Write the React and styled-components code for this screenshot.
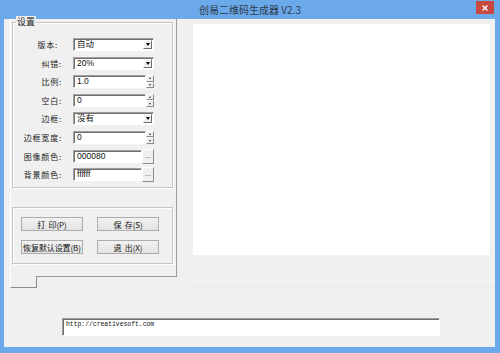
import React from 'react';
import styled, { createGlobalStyle } from 'styled-components';

const GlobalStyle = createGlobalStyle`
  html, body {
    margin:0;
    padding:0;
    background:#6ca9eb;
  }
  body {
    font-family:"Noto Sans CJK SC", "Liberation Sans", sans-serif;
  }
`;

const Window = styled.div`
  width:500px;
  height:353px;
  background:#6ca9eb;
  display:flex;
  flex-direction:column;
  overflow:hidden;
`;

const TitleBar = styled.div`
  position:relative;
  height:19px;
  display:flex;
  align-items:center;
  justify-content:center;
  font-size:10px;
  color:#2d3b4c;
`;

const CloseButton = styled.div`
  position:absolute;
  top:1px;
  right:6px;
  width:18px;
  height:13px;
  display:flex;
  align-items:center;
  justify-content:center;
  background:#c8493d;
`;

const Client = styled.div`
  flex:1;
  margin:0 5px 6px 4px;
  background:#f0f0f0;
  display:flex;
  flex-direction:column;
`;

const TopRow = styled.div`
  display:flex;
  height:269px;
`;

const LeftPanel = styled.div`
  margin-left:6px;
  width:167px;
  display:flex;
  flex-direction:column;
`;

const PanelBody = styled.div`
  box-sizing:border-box;
  height:258px;
  border-left:1px solid #fff;
  border-right:1px solid #9c9c9c;
  border-bottom:1px solid #9c9c9c;
  padding:3px 3px 0 1px;
`;

const Tab = styled.div`
  box-sizing:border-box;
  width:27px;
  height:12px;
  margin-top:-1px;
  background:#f0f0f0;
  border-left:1px solid #fff;
  border-right:1px solid #8c8c8c;
  border-bottom:1px solid #8c8c8c;
`;

const GroupBox = styled.div`
  position:relative;
  box-sizing:border-box;
  height:${p => p.$height}px;
  margin-top:${p => p.$top || 0}px;
  border:1px solid #c4c4c4;
  box-shadow:inset 1px 1px 0 #fff, 1px 1px 0 #fff;
`;

const Legend = styled.span`
  position:absolute;
  top:-7px;
  left:3px;
  padding:0 1px;
  background:#f0f0f0;
  font-size:9px;
  line-height:11px;
  color:#222;
`;

const FormGrid = styled.div`
  display:grid;
  grid-template-columns:49px 81px;
  column-gap:11px;
  grid-auto-rows:13px;
  row-gap:5.6px;
  padding-top:15px;
`;

const Label = styled.div`
  text-align:right;
  padding-right:${p => p.$shift || 0}px;
  font-size:8px;
  letter-spacing:0.8px;
  line-height:13px;
  color:#1a1a1a;
  white-space:nowrap;
`;

const Field = styled.div`
  display:flex;
  height:13px;
`;

const Sunken = styled.div`
  box-sizing:border-box;
  flex:${p => (p.$width ? 'none' : '1')};
  width:${p => (p.$width ? `${p.$width}px` : 'auto')};
  height:100%;
  display:flex;
  align-items:center;
  background:#fff;
  border:1px solid;
  border-color:#a0a0a0 #fff #fff #a0a0a0;
  box-shadow:inset 1px 1px 0 #6f6f6f;
  padding-left:3px;
  font-family:"Liberation Sans", "Noto Sans CJK SC", sans-serif;
  font-size:8.5px;
  color:#111;
  overflow:hidden;
`;

const Value = styled.span`
  flex:1;
  line-height:11px;
`;

const DropArrow = styled.div`
  box-sizing:border-box;
  width:9px;
  height:9px;
  margin-right:1px;
  display:flex;
  align-items:center;
  justify-content:center;
  background:#f0f0f0;
  border:1px solid;
  border-color:#fff #6f6f6f #6f6f6f #fff;

  &::after{
    content:'';
    border-left:2.5px solid transparent;
    border-right:2.5px solid transparent;
    border-top:3px solid #000;
  }
`;

const Spinner = styled.div`
  width:8px;
  display:flex;
  flex-direction:column;
`;

const SpinHalf = styled.div`
  flex:1;
  box-sizing:border-box;
  display:flex;
  align-items:center;
  justify-content:center;
  background:#eeeeee;
  border:1px solid;
  border-color:#fff #8c8c8c #8c8c8c #fff;

  &::after{
    content:'';
    border-left:1.5px solid transparent;
    border-right:1.5px solid transparent;
    ${p => (p.$up ? 'border-bottom:2px solid #333;' : 'border-top:2px solid #333;')}
  }
`;

const DotsButton = styled.div`
  box-sizing:border-box;
  width:13px;
  height:15px;
  margin-top:-1px;
  background:#f0f0f0;
  border:1px solid;
  border-color:#fff #8c8c8c #8c8c8c #fff;
  font-family:"Liberation Sans", sans-serif;
  font-size:7px;
  line-height:11px;
  text-align:center;
  color:#333;
`;

const ButtonGrid = styled.div`
  display:grid;
  grid-template-columns:62px 62px;
  column-gap:14px;
  grid-auto-rows:14px;
  row-gap:9px;
  padding:9px 0 0 8px;
`;

const Button = styled.div`
  box-sizing:border-box;
  display:flex;
  align-items:center;
  justify-content:center;
  border:1px solid #acacac;
  background:linear-gradient(#f2f2f2, #e3e3e3);
  font-size:8px;
  color:#111;
  white-space:pre;
  letter-spacing:-0.1px;
`;

const RightArea = styled.div`
  flex:1;
  margin-left:13px;
  padding:5px 0 0 3px;
  border-bottom:1px solid #eaeaea;
`;

const Preview = styled.div`
  width:297px;
  height:231px;
  background:#fff;
`;

const UrlBox = styled.div`
  box-sizing:border-box;
  width:378px;
  height:18px;
  margin:30px 0 0 58px;
  padding:2px 0 0 3px;
  background:#fff;
  border:1px solid;
  border-color:#a0a0a0 #fff #fff #a0a0a0;
  box-shadow:inset 1px 1px 0 #6f6f6f;
  font-family:"Liberation Mono", monospace;
  font-size:6.4px;
  line-height:8px;
  color:#111;
`;

const rows = [
  { label: '版本:', kind: 'select', value: '自动', shift: 4 },
  { label: '纠错:', kind: 'select', value: '20%' },
  { label: '比例:', kind: 'spin', value: '1.0' },
  { label: '空白:', kind: 'spin', value: '0' },
  { label: '边框:', kind: 'select', value: '没有' },
  { label: '边框宽度:', kind: 'spin', value: '0' },
  { label: '图像颜色:', kind: 'color', value: '000080' },
  { label: '背景颜色:', kind: 'color', value: 'ffffff' },
];

function FieldFor({ row }) {
  if (row.kind === 'select') {
    return (
      <Field>
        <Sunken>
          <Value>{row.value}</Value>
          <DropArrow />
        </Sunken>
      </Field>
    );
  }
  if (row.kind === 'spin') {
    return (
      <Field>
        <Sunken $width={73}>
          <Value>{row.value}</Value>
        </Sunken>
        <Spinner>
          <SpinHalf $up />
          <SpinHalf />
        </Spinner>
      </Field>
    );
  }
  return (
    <Field>
      <Sunken $width={69}>
        <Value>{row.value}</Value>
      </Sunken>
      <DotsButton>...</DotsButton>
    </Field>
  );
}

export default function App() {
  return (
    <Window>
      <GlobalStyle />
      <TitleBar>
        创易二维码生成器 V2.3
        <CloseButton>
          <svg width="6" height="6" viewBox="0 0 6 6">
            <path d="M0.5 0.5 L5.5 5.5 M5.5 0.5 L0.5 5.5" stroke="#fff" strokeWidth="1.4" />
          </svg>
        </CloseButton>
      </TitleBar>
      <Client>
        <TopRow>
          <LeftPanel>
            <PanelBody>
              <GroupBox $height={166}>
                <Legend>设置</Legend>
                <FormGrid>
                  {rows.map(row => (
                    <React.Fragment key={row.label}>
                      <Label $shift={row.shift}>{row.label}</Label>
                      <FieldFor row={row} />
                    </React.Fragment>
                  ))}
                </FormGrid>
              </GroupBox>
              <GroupBox $height={57} $top={19}>
                <ButtonGrid>
                  <Button>{'打  印(P)'}</Button>
                  <Button>{'保  存(S)'}</Button>
                  <Button>恢复默认设置(B)</Button>
                  <Button>{'退  出(X)'}</Button>
                </ButtonGrid>
              </GroupBox>
            </PanelBody>
            <Tab />
          </LeftPanel>
          <RightArea>
            <Preview />
          </RightArea>
        </TopRow>
        <UrlBox>http://creativesoft.com</UrlBox>
      </Client>
    </Window>
  );
}
